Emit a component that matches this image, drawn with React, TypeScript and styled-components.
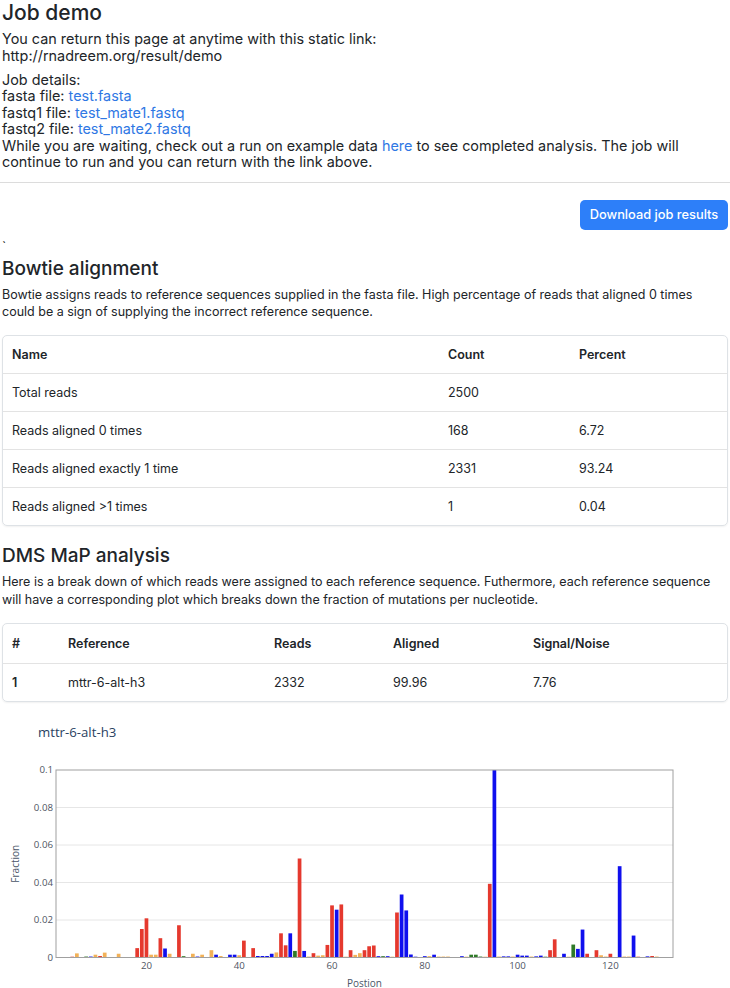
import React from 'react';
import styled, { createGlobalStyle } from 'styled-components';

const GlobalStyle = createGlobalStyle`
  html, body { margin: 0; padding: 0; background: #ffffff; }
  body {
    font-family: Inter, "Noto Sans", Arial, sans-serif;
    color: #212529;
    -webkit-font-smoothing: antialiased;
  }
  * { box-sizing: border-box; }
`;

const Page = styled.div`
  width: 730px;
  padding: 0 2px;
`;

const Title = styled.h1`
  margin: 0 0 5px;
  font-size: 21px;
  line-height: 26px;
  font-weight: 500;
`;

const Info = styled.p<{ $gap?: number }>`
  margin: 0 0 ${(p) => p.$gap ?? 0}px;
  font-size: 14.4px;
  line-height: 16.5px;
`;

const Link = styled.a`
  color: #2f78e4;
  text-decoration: none;
`;

const Divider = styled.hr`
  margin: 11px -2px 0 -2px;
  border: 0;
  border-top: 1px solid #dcdcdc;
  height: 0;
`;

const ButtonRow = styled.div`
  display: flex;
  justify-content: flex-end;
  margin-top: 17px;
`;

const PrimaryButton = styled.button`
  width: 148px;
  height: 30px;
  border: none;
  border-radius: 5px;
  background: #2d7ff9;
  color: #ffffff;
  font-family: Inter, "Noto Sans", Arial, sans-serif;
  font-size: 12.8px;
  font-weight: 500;
  padding: 0;
`;

const Stray = styled.div`
  margin-top: 8px;
  font-size: 13px;
  line-height: 16px;
`;

const SectionTitle = styled.h2<{ $top: number }>`
  margin: ${(p) => p.$top}px 0 5px;
  font-size: 19px;
  line-height: 24px;
  font-weight: 500;
`;

const Desc = styled.p`
  margin: 0;
  font-size: 12.5px;
  line-height: 17.7px;
`;

const TableCard = styled.div`
  margin-top: 14.5px;
  border: 1px solid #dee2e6;
  border-radius: 5px;
  box-shadow: 0 1px 2px rgba(0, 0, 0, 0.06);
  overflow: hidden;
`;

const Row = styled.div<{ $cols: string; $h: number }>`
  display: grid;
  grid-template-columns: ${(p) => p.$cols};
  align-items: center;
  height: ${(p) => p.$h}px;
  & + & {
    border-top: 1px solid #e3e3e3;
  }
`;

const Cell = styled.div<{ $bold?: boolean }>`
  padding-left: 9px;
  font-size: 12.5px;
  font-weight: ${(p) => (p.$bold ? 600 : 400)};
  white-space: nowrap;
`;

const ChartBox = styled.div`
  margin: 5px -2px 0 -2px;
`;

const ChartSvg = styled.svg`
  display: block;
`;

type Base = 'R' | 'O' | 'B' | 'G';
const COLORS: Record<Base, string> = {
  R: '#e5392e',
  O: '#f2b158',
  B: '#1010ee',
  G: '#2f7a28',
};

const DATA: Array<[number, number, Base]> = [
  [4, 0.0004, 'R'], [5, 0.0022, 'O'], [7, 0.0005, 'G'], [8, 0.0005, 'B'],
  [9, 0.0015, 'O'], [10, 0.0008, 'R'], [11, 0.0026, 'O'], [14, 0.002, 'O'],
  [18, 0.005, 'R'], [19, 0.0152, 'R'], [20, 0.0209, 'R'], [21, 0.0015, 'O'],
  [22, 0.0015, 'O'], [23, 0.0103, 'R'], [24, 0.0048, 'B'], [25, 0.002, 'O'],
  [27, 0.0172, 'R'], [28, 0.0007, 'G'], [30, 0.002, 'O'], [31, 0.0005, 'B'],
  [32, 0.0015, 'O'], [34, 0.0039, 'O'], [35, 0.0015, 'B'], [36, 0.0008, 'O'],
  [38, 0.0015, 'B'], [39, 0.0015, 'B'], [40, 0.0012, 'O'], [41, 0.009, 'R'],
  [43, 0.005, 'R'], [44, 0.0008, 'B'], [45, 0.0008, 'B'], [46, 0.0008, 'B'],
  [47, 0.002, 'B'], [48, 0.0027, 'O'], [49, 0.0129, 'R'], [50, 0.0065, 'R'],
  [51, 0.0129, 'B'], [52, 0.0035, 'G'], [53, 0.0528, 'R'], [54, 0.0035, 'B'],
  [55, 0.0005, 'O'], [56, 0.0023, 'R'], [57, 0.001, 'O'], [58, 0.0012, 'O'],
  [59, 0.0067, 'R'], [60, 0.0278, 'R'], [61, 0.0255, 'B'], [62, 0.0283, 'R'],
  [63, 0.0004, 'O'], [64, 0.0039, 'R'], [65, 0.0014, 'O'], [66, 0.0023, 'O'],
  [67, 0.0039, 'R'], [68, 0.006, 'R'], [69, 0.0064, 'R'], [70, 0.0007, 'B'],
  [71, 0.0007, 'G'], [72, 0.0007, 'B'], [73, 0.0004, 'O'], [74, 0.024, 'R'],
  [75, 0.0336, 'B'], [76, 0.0251, 'B'], [77, 0.0016, 'B'], [78, 0.0004, 'B'],
  [80, 0.0007, 'B'], [81, 0.0007, 'O'], [82, 0.0015, 'B'], [83, 0.0005, 'O'],
  [84, 0.0005, 'O'], [85, 0.0005, 'O'], [88, 0.0007, 'B'], [89, 0.0004, 'O'],
  [90, 0.0015, 'G'], [91, 0.0015, 'G'], [92, 0.0005, 'G'], [93, 0.0004, 'O'],
  [94, 0.0393, 'R'], [95, 0.12, 'B'], [96, 0.0005, 'O'], [97, 0.0006, 'B'],
  [98, 0.0006, 'B'], [99, 0.0005, 'O'], [100, 0.0015, 'B'], [101, 0.001, 'B'],
  [102, 0.001, 'B'], [103, 0.0005, 'O'], [104, 0.0006, 'B'], [105, 0.001, 'B'],
  [106, 0.0004, 'G'], [107, 0.0039, 'R'], [108, 0.0097, 'R'], [110, 0.002, 'B'],
  [111, 0.0004, 'O'], [112, 0.0069, 'G'], [113, 0.0046, 'B'], [114, 0.0149, 'B'],
  [115, 0.002, 'R'], [117, 0.0039, 'R'], [118, 0.0012, 'O'], [119, 0.0005, 'O'],
  [120, 0.002, 'R'], [122, 0.0487, 'B'], [123, 0.0005, 'O'], [124, 0.0005, 'O'],
  [125, 0.0117, 'B'], [126, 0.0004, 'R'], [128, 0.0006, 'B'], [129, 0.0008, 'R'],
  [130, 0.0005, 'O'],
];

const PLOT = { left: 56, right: 673, top: 769, bottom: 956.5 };
const UNIT = (PLOT.right - PLOT.left) / 133;
const YSCALE = (PLOT.bottom - PLOT.top) / 0.1;
const xOf = (p: number) => PLOT.left + (p - 0.5) * UNIT;
const yOf = (v: number) => PLOT.bottom - v * YSCALE;

const tickFont = { fontFamily: '"Open Sans", Arial, sans-serif', fontSize: 9.7, fill: '#4f5563' };
const axisFont = { fontFamily: '"Open Sans", Arial, sans-serif', fontSize: 10, fill: '#4a5568' };

function MutationChart() {
  const yTicks = [0, 0.02, 0.04, 0.06, 0.08, 0.1];
  const xTicks = [20, 40, 60, 80, 100, 120];
  const bw = UNIT * 0.8;
  return (
    <ChartSvg width={730} height={282} viewBox="0 706 730 282">
      <text x={38} y={735.5} fontFamily='"Open Sans", Arial, sans-serif' fontSize={13.2} fill="#2a3f5f">
        mttr-6-alt-h3
      </text>
      {yTicks.slice(1, 5).map((t) => (
        <line key={t} x1={PLOT.left} x2={PLOT.right} y1={yOf(t)} y2={yOf(t)} stroke="#e6e6e6" strokeWidth={1} />
      ))}
      {DATA.map(([p, v, b]) => {
        const h = Math.max(Math.min(v, 0.1) * YSCALE, 0.8);
        return (
          <rect key={p} x={xOf(p) - bw / 2} y={PLOT.bottom - h} width={bw} height={h} fill={COLORS[b]} />
        );
      })}
      <rect
        x={PLOT.left}
        y={PLOT.top}
        width={PLOT.right - PLOT.left}
        height={PLOT.bottom - PLOT.top}
        fill="none"
        stroke="#a0a0a0"
        strokeWidth={1}
      />
      {yTicks.map((t) => (
        <text key={t} x={53} y={yOf(t) + 3.4} textAnchor="end" {...tickFont}>
          {t === 0 ? '0' : String(t)}
        </text>
      ))}
      {xTicks.map((t) => (
        <text key={t} x={xOf(t)} y={967.5} textAnchor="middle" {...tickFont}>
          {t}
        </text>
      ))}
      <text x={364.5} y={985.6} textAnchor="middle" {...axisFont}>
        Postion
      </text>
      <text
        x={0}
        y={0}
        textAnchor="middle"
        transform={`translate(18.5 ${(PLOT.top + PLOT.bottom) / 2}) rotate(-90)`}
        {...axisFont}
      >
        Fraction
      </text>
    </ChartSvg>
  );
}

const BOWTIE_COLS = '436px 131px 1fr';
const DMS_COLS = '56px 206px 119px 140px 1fr';

const bowtieRows: Array<[string, string, string]> = [
  ['Total reads', '2500', ''],
  ['Reads aligned 0 times', '168', '6.72'],
  ['Reads aligned exactly 1 time', '2331', '93.24'],
  ['Reads aligned >1 times', '1', '0.04'],
];

export default function App() {
  return (
    <Page>
      <GlobalStyle />
      <Title>Job demo</Title>
      <Info $gap={7.5}>
        You can return this page at anytime with this static link:
        <br />
        http://rnadreem.org/result/demo
      </Info>
      <Info>
        Job details:
        <br />
        fasta file: <Link href="#">test.fasta</Link>
        <br />
        fastq1 file: <Link href="#">test_mate1.fastq</Link>
        <br />
        fastq2 file: <Link href="#">test_mate2.fastq</Link>
        <br />
        While you are waiting, check out a run on example data <Link href="#">here</Link> to see completed
        analysis. The job will continue to run and you can return with the link above.
      </Info>
      <Divider />
      <ButtonRow>
        <PrimaryButton>Download job results</PrimaryButton>
      </ButtonRow>
      <Stray>`</Stray>
      <SectionTitle $top={3}>Bowtie alignment</SectionTitle>
      <Desc>
        Bowtie assigns reads to reference sequences supplied in the fasta file. High percentage of reads that aligned
        0 times could be a sign of supplying the incorrect reference sequence.
      </Desc>
      <TableCard>
        <Row $cols={BOWTIE_COLS} $h={37}>
          <Cell $bold>Name</Cell>
          <Cell $bold>Count</Cell>
          <Cell $bold>Percent</Cell>
        </Row>
        {bowtieRows.map(([n, c, pct]) => (
          <Row key={n} $cols={BOWTIE_COLS} $h={38}>
            <Cell>{n}</Cell>
            <Cell>{c}</Cell>
            <Cell>{pct}</Cell>
          </Row>
        ))}
      </TableCard>
      <SectionTitle $top={18}>DMS MaP analysis</SectionTitle>
      <Desc>
        Here is a break down of which reads were assigned to each reference sequence. Futhermore, each reference
        sequence will have a corresponding plot which breaks down the fraction of mutations per nucleotide.
      </Desc>
      <TableCard>
        <Row $cols={DMS_COLS} $h={39}>
          <Cell $bold>#</Cell>
          <Cell $bold>Reference</Cell>
          <Cell $bold>Reads</Cell>
          <Cell $bold>Aligned</Cell>
          <Cell $bold>Signal/Noise</Cell>
        </Row>
        <Row $cols={DMS_COLS} $h={38}>
          <Cell $bold>1</Cell>
          <Cell>mttr-6-alt-h3</Cell>
          <Cell>2332</Cell>
          <Cell>99.96</Cell>
          <Cell>7.76</Cell>
        </Row>
      </TableCard>
      <ChartBox>
        <MutationChart />
      </ChartBox>
    </Page>
  );
}
